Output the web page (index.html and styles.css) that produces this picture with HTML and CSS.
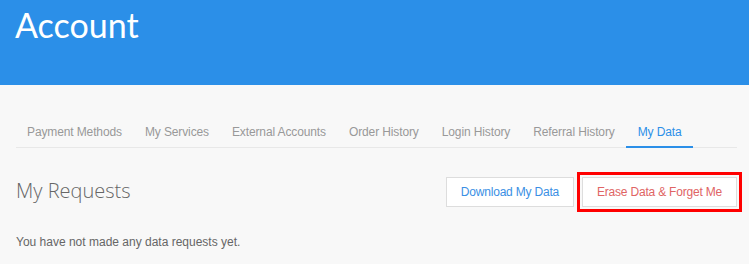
FILE: index.html
```html
<!DOCTYPE html>
<html lang="en">
<head>
  <meta charset="UTF-8" />
  <meta name="viewport" content="width=device-width, initial-scale=1.0" />
  <title>Account</title>
  <link rel="stylesheet" href="styles.css">
</head>
<body>
  <div class="header">
    <h1>Account</h1>
  </div>

  <div class="container">
    <ul class="tabs">
      <li>Payment Methods</li>
      <li>My Services</li>
      <li>External Accounts</li>
      <li>Order History</li>
      <li>Login History</li>
      <li>Referral History</li>
      <li class="active">My Data</li>
    </ul>

    <div class="requests-head">
      <h2>My Requests</h2>
      <div class="actions">
        <button class="btn btn-download">Download My Data</button>
        <button class="btn btn-erase highlight">Erase Data &amp; Forget Me</button>
      </div>
    </div>

    <p class="empty">You have not made any data requests yet.</p>
  </div>
</body>
</html>
```

FILE: styles.css
```css
body {
  margin: 0;
  padding: 0;
  background: #f8f8f8;
  font-family: "Liberation Sans", Arial, sans-serif;
  color: #666;
}
.header {
  background: #2b8fe8;
  height: 85px;
  padding: 0 15px;
  box-sizing: border-box;
}
.header h1 {
  margin: 0;
  padding-top: 4px;
  font-family: Lato, sans-serif;
  font-weight: 400;
  font-size: 34px;
  line-height: 42px;
  color: #fff;
}
.container {
  padding: 0 12px 0 16px;
}
.tabs {
  list-style: none;
  margin: 36px 0 0;
  padding: 0;
  display: flex;
  border-bottom: 1px solid #e8e8e8;
}
.tabs li {
  padding: 2px 11.5px 5px;
  font-size: 12px;
  line-height: 18px;
  letter-spacing: -0.12px;
  color: #999;
  margin-bottom: -1px;
  border-bottom: 2px solid transparent;
}
.tabs li:first-child {
  padding-left: 11px;
}
.tabs li.active {
  color: #2b8fe8;
  border-bottom-color: #2b8fe8;
}
.requests-head {
  display: flex;
  justify-content: space-between;
  align-items: center;
  margin-top: 29px;
}
.requests-head h2 {
  margin: 0 0 3px;
  font-family: "Open Sans", sans-serif;
  font-weight: 300;
  font-size: 20px;
  color: #666;
}
.actions {
  display: flex;
  gap: 8px;
}
.btn {
  background: #fff;
  border: 1px solid #ddd;
  height: 30px;
  padding: 0 14px;
  font-family: "Liberation Sans", Arial, sans-serif;
  font-size: 12px;
  letter-spacing: -0.2px;
  cursor: pointer;
}
.btn-download {
  color: #3a8fe4;
}
.btn-erase {
  color: #e06464;
}
.highlight {
  outline: 3px solid #f00;
  outline-offset: 2px;
}
.empty {
  margin: 28px 0 0;
  font-size: 12px;
  color: #666;
}
```
